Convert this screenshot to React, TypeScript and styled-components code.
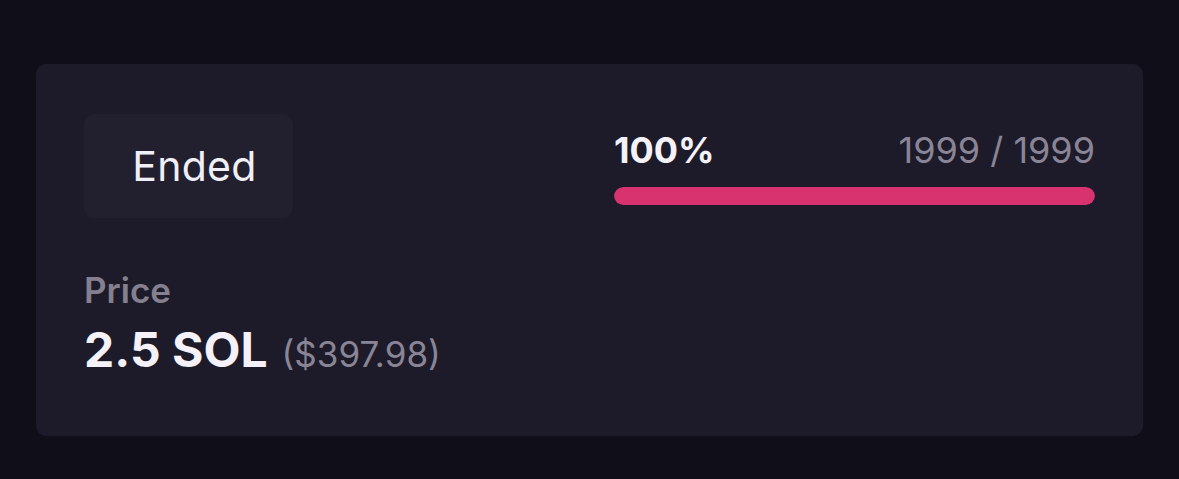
import * as React from 'react';
import styled, { createGlobalStyle } from 'styled-components';

const GlobalStyle = createGlobalStyle`
  html, body {
    margin: 0;
    padding: 0;
    background: #100e18;
  }

  body {
    font-family: Inter, "Noto Sans", sans-serif;
    -webkit-font-smoothing: antialiased;
  }
`

const Page = styled.div`
  width: 1179px;
  height: 479px;
  padding: 64px 36px 0 36px;
  box-sizing: border-box;
`

const Card = styled.div`
  height: 372px;
  box-sizing: border-box;
  padding: 50px 48px 0 48px;

  background: #1d1b29;
  border-radius: 10px;
`

const TopRow = styled.div`
  display: flex;
  justify-content: space-between;
  align-items: flex-start;
`

const StatusBox = styled.div`
  display: flex;
  align-items: center;
  justify-content: center;

  width: 209px;
  height: 104px;
  padding-left: 12px;
  box-sizing: border-box;

  background: #221f2f;
  border-radius: 10px;

  font-size: 41px;
  font-weight: 400;
  letter-spacing: 0.3px;
  color: #f1eff6;
`

const Progress = styled.div`
  width: 481px;
  padding-top: 18px;
`

const ProgressHead = styled.div`
  display: flex;
  justify-content: space-between;
  align-items: baseline;
  line-height: 36px;
`

const Percent = styled.span`
  font-size: 36px;
  font-weight: 700;
  color: #f4f2f8;
`

const Count = styled.span`
  font-size: 36px;
  font-weight: 400;
  color: #8a8596;
`

const Track = styled.div`
  margin-top: 19px;
  height: 18px;
  border-radius: 9px;
  background: #2c2938;
  overflow: hidden;
`

const Fill = styled.div`
  height: 100%;
  border-radius: 9px;
  background: #d8336e;
`

const PriceBlock = styled.div`
  margin-top: 52px;
  display: flex;
  flex-direction: column;
  gap: 14px;
`

const Label = styled.div`
  font-size: 35px;
  font-weight: 600;
  line-height: 40px;
  color: #85808f;
`

const PriceRow = styled.div`
  display: flex;
  align-items: baseline;
  gap: 14px;
  line-height: 52px;
`

const Amount = styled.span`
  font-size: 48px;
  font-weight: 700;
  color: #f4f2f8;
`

const Fiat = styled.span`
  font-size: 35px;
  font-weight: 400;
  color: #8a8596;
`

export default function App() {
  const minted = 1999
  const supply = 1999
  const pct = Math.round((minted / supply) * 100)

  return (
    <>
      <GlobalStyle />
      <Page>
        <Card>
          <TopRow>
            <StatusBox>Ended</StatusBox>
            <Progress>
              <ProgressHead>
                <Percent>{pct}%</Percent>
                <Count>{minted} / {supply}</Count>
              </ProgressHead>
              <Track>
                <Fill style={{ width: `${pct}%` }} />
              </Track>
            </Progress>
          </TopRow>
          <PriceBlock>
            <Label>Price</Label>
            <PriceRow>
              <Amount>2.5 SOL</Amount>
              <Fiat>($397.98)</Fiat>
            </PriceRow>
          </PriceBlock>
        </Card>
      </Page>
    </>
  )
}
